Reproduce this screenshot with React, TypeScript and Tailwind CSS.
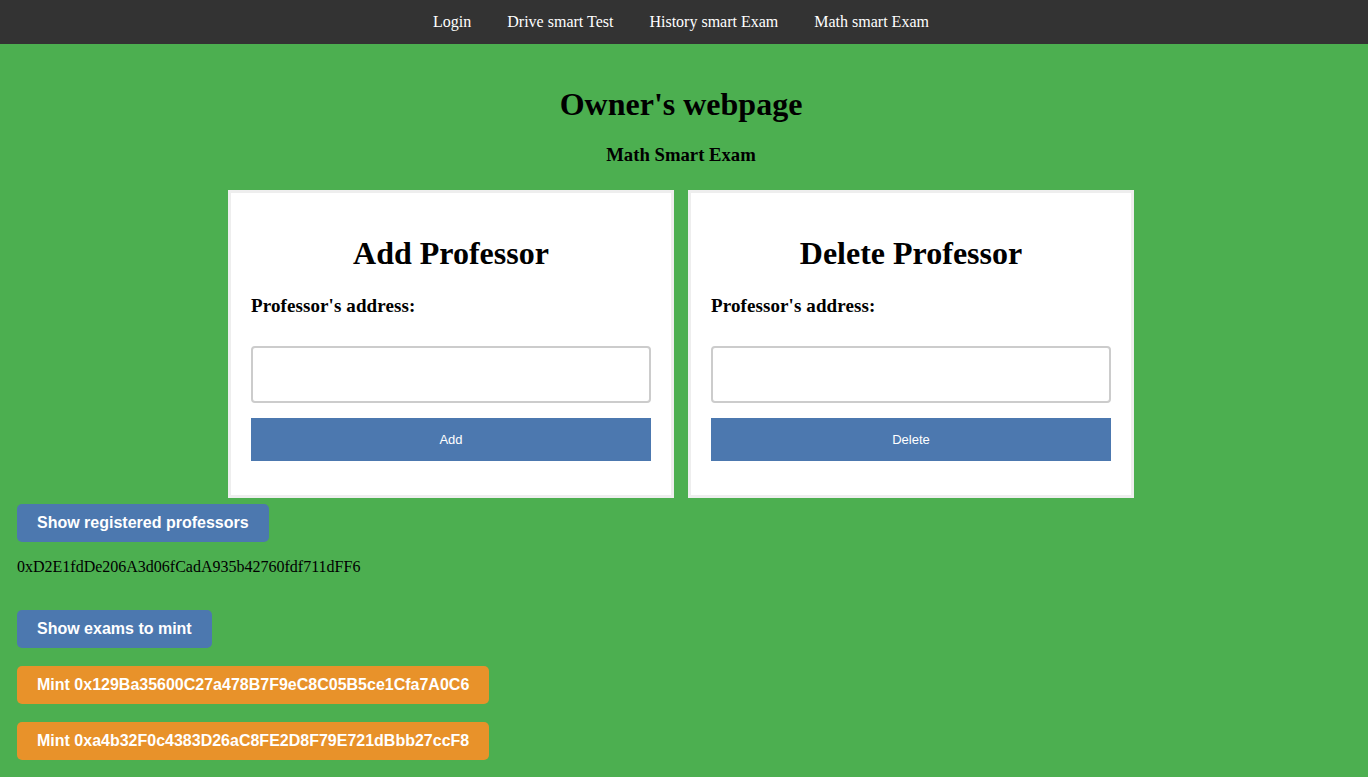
const serif = "font-['Liberation_Serif','Times_New_Roman',serif]";
const sans = "font-['Liberation_Sans',Arial,sans-serif]";

function ProfessorCard({ title, action }: { title: string; action: string }) {
  return (
    <div className="w-[446px] h-[308px] border-[3px] border-[#eeeeee] bg-white px-[20px] pt-[20px]">
      <h1 className="mt-[22px] mb-[23px] text-center text-[32px] leading-[37px] font-bold text-black">
        {title}
      </h1>
      <label className="block text-[19px] leading-[22px] font-bold tracking-[0.1px] text-black">
        Professor's address:
      </label>
      <input
        type="text"
        className="mt-[29px] block w-[400px] h-[57px] border-2 border-[#cccccc] rounded-[4px] px-3 outline-none"
      />
      <button
        className={`mt-[15px] block w-[400px] h-[43px] bg-[#4c78af] text-white text-[13px] ${sans}`}
      >
        {action}
      </button>
    </div>
  );
}

export default function App() {
  const mints = [
    "0x129Ba35600C27a478B7F9eC8C05B5ce1Cfa7A0C6",
    "0xa4b32F0c4383D26aC8FE2D8F79E721dBbb27ccF8",
  ];

  return (
    <div className={`min-h-[777px] bg-[#4caf50] ${serif}`}>
      <nav className="h-[44px] bg-[#333333]">
        <div className="w-[1362px] h-full flex justify-center items-center">
          {["Login", "Drive smart Test", "History smart Exam", "Math smart Exam"].map((l) => (
            <a key={l} className="px-[18px] text-white text-[16px] leading-[18px] cursor-pointer">
              {l}
            </a>
          ))}
        </div>
      </nav>

      <div className="w-[1362px]">
        <h1 className="mt-[42px] text-center text-[32px] leading-[37px] font-bold text-black">
          Owner's webpage
        </h1>
        <h3 className="mt-[21px] text-center text-[18.72px] leading-[22px] font-bold text-black">
          Math Smart Exam
        </h3>

        <div className="mt-[24px] flex justify-center gap-[14px]">
          <ProfessorCard title="Add Professor" action="Add" />
          <ProfessorCard title="Delete Professor" action="Delete" />
        </div>
      </div>

      <div className="pl-[17px] pb-[17px]">
        <button
          className={`mt-[6px] block h-[38px] px-[20px] rounded-[5px] bg-[#4c78af] text-white font-bold text-[16px] whitespace-nowrap ${sans}`}
        >
          Show registered professors
        </button>
        <p className="mt-[16px] text-[16px] leading-[18px] text-black">
          0xD2E1fdDe206A3d06fCadA935b42760fdf711dFF6
        </p>
        <button
          className={`mt-[34px] block h-[38px] px-[20px] rounded-[5px] bg-[#4c78af] text-white font-bold text-[16px] whitespace-nowrap ${sans}`}
        >
          Show exams to mint
        </button>
        {mints.map((m) => (
          <button
            key={m}
            className={`mt-[18px] block h-[38px] px-[20px] rounded-[5px] bg-[#e8922a] text-white font-bold text-[16px] whitespace-nowrap ${sans}`}
          >
            Mint {m}
          </button>
        ))}
      </div>
    </div>
  );
}
